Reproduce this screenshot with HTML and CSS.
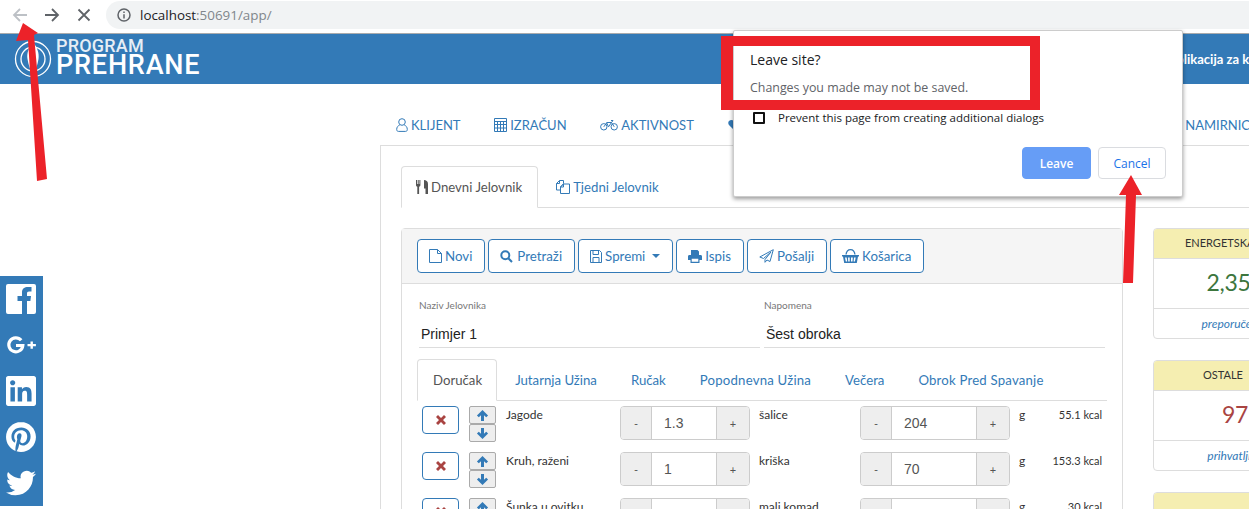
FILE: index.html
```html
<!DOCTYPE html>
<html lang="hr">
<head>
  <meta charset="UTF-8">
  <title>Program Prehrane</title>
  <link rel="stylesheet" href="styles.css">
</head>
<body>
  <svg class="sprite" width="0" height="0">
    <symbol id="i-up" viewBox="0 0 14 14"><path d="M7 1 13 7 11 9 8.6 6.6V13H5.4V6.6L3 9 1 7Z"/></symbol>
    <symbol id="i-down" viewBox="0 0 14 14"><path d="M7 13 1 7 3 5 5.4 7.4V1H8.6V7.4L11 5 13 7Z"/></symbol>
    <symbol id="i-x" viewBox="0 0 12 12"><path d="M3 1 6 4 9 1 11 3 8 6 11 9 9 11 6 8 3 11 1 9 4 6 1 3Z"/></symbol>
  </svg>

  <div class="toolbar">
    <svg class="nav-ico dim" viewBox="0 0 16 16"><path d="M15 8H2M8 2 2 8l6 6"/></svg>
    <svg class="nav-ico" viewBox="0 0 16 16"><path d="M1 8h13M8 2l6 6-6 6"/></svg>
    <svg class="nav-ico" viewBox="0 0 16 16"><path d="M2.5 2.5l11 11M13.500 2.500l-11 11"/></svg>
    <div class="omnibox">
      <svg class="info" viewBox="0 0 14 14"><circle cx="7" cy="7" r="6"/><path d="M7 6.200V10.500M7 3.500V5"/></svg>
      <span class="host">localhost</span><span class="path">:50691/app/</span>
    </div>
  </div>

  <header class="banner">
    <svg class="logo" viewBox="0 0 38 38">
      <circle cx="19" cy="19" r="17.500"/>
      <circle cx="19" cy="19" r="12"/>
      <path class="logo-fig" d="M19 2c4 5 6.500 11 5.500 17-.8 6-3 11-5.500 17-2.500-6-4.700-11-5.500-17-1-6 1.500-12 5.500-17Z"/>
    </svg>
    <div class="logo-text">
      <span class="logo-top">PROGRAM</span>
      <span class="logo-bottom">PREHRANE</span>
    </div>
    <span class="tagline">Aplikacija za kontrolu prehrane</span>
  </header>

  <nav class="mainnav">
    <a class="nav-item">
      <svg class="ico-line" width="12" height="14" viewBox="0 0 12 14"><circle cx="6" cy="4" r="3.300"/><path d="M3.600 7.200C2 7.700.7 9 .7 11.500c0 1.200.6 1.900 1.800 1.900h7c1.200 0 1.800-.7 1.800-1.900 0-2.500-1.300-3.800-2.900-4.300"/></svg>
      KLIJENT
    </a>
    <a class="nav-item">
      <svg class="ico-line" width="13" height="14" viewBox="0 0 13 14"><path d="M.5.500h12v13H.5zM.5 3.500h12M.5 6.500h12M.5 10h12M3.500 3.500v10M6.500 3.500v10M9.500 3.500v10"/></svg>
      IZRAČUN
    </a>
    <a class="nav-item">
      <svg class="ico-line" width="18" height="12" viewBox="0 0 18 12"><circle cx="3.800" cy="7.800" r="3.200"/><circle cx="14.200" cy="7.800" r="3.200"/><path d="M3.800 7.800 7 3.500h4.500l2.700 4.300M11 1.500h2l-1.500 2L8.500 7.800 6.500 3.500"/></svg>
      AKTIVNOST
    </a>
    <a class="nav-item">
      <svg class="ico-fill" width="14" height="12" viewBox="0 0 14 12"><path d="M7 12 1.200 6.200C-.6 4.300.2 1 3.500 1 5 1 6.200 1.800 7 3c.8-1.200 2-2 3.500-2 3.300 0 4.100 3.300 2.300 5.200Z"/></svg>
    </a>
    <a class="nav-item nav-last">NAMIRNICE</a>
  </nav>

  <main class="content">
    <div class="tabs">
      <a class="tab active">
        <svg class="ico-dark" width="12" height="14" viewBox="0 0 12 14"><path d="M0 0h1v4h.7V0h1v4h.7V0h1v5c0 1-.6 1.600-1.300 1.800V14H1.300V6.800C.6 6.600 0 6 0 5ZM8 0c2 0 4 1 4 4v10H9.500V8.500H8Z"/></svg>
        Dnevni Jelovnik
      </a>
      <a class="tab">
        <svg class="ico-line" width="14" height="14" viewBox="0 0 14 14"><path d="M.5 3.500 3.500.5h4v3.200L4.500 7v3H.5ZM4.500 7l3-3h6v9.500h-9ZM3.500.5v3h-3M7.500 4v3h-3"/></svg>
        Tjedni Jelovnik
      </a>
    </div>

    <div class="columns">
      <section class="panel">
        <div class="panel-head">
          <button class="btn">
            <svg class="ico-line" width="13" height="14" viewBox="0 0 13 14"><path d="M.5.500h8l4 4v9H.5ZM8.500.5v4h4"/></svg>
            Novi
          </button>
          <button class="btn">
            <svg class="ico-thick" width="14" height="13" viewBox="0 0 14 13"><circle cx="5.300" cy="5.300" r="4"/><path d="M8.300 8.300 12 12"/></svg>
            Pretraži
          </button>
          <button class="btn">
            <svg class="ico-line" width="12" height="13" viewBox="0 0 12 13"><path d="M.5.500h9l2 2v10H.5ZM3 .5v4h5.500v-4M3 12.500V7.500h6v5"/></svg>
            Spremi <i class="caret"></i>
          </button>
          <button class="btn">
            <svg class="ico-fill" width="14" height="13" viewBox="0 0 14 13"><path d="M3 0h6.500L11 1.500V5H3ZM0 6.500C0 5.500.6 5 1.500 5h11c.9 0 1.500.5 1.500 1.500V10h-2.500v3h-9v-3H0Zm3.700 2.300V11.800h6.600V8.800Z"/></svg>
            Ispis
          </button>
          <button class="btn">
            <svg class="ico-line" width="15" height="14" viewBox="0 0 15 14"><path d="M14.300.7.800 8 4.500 9.500 12 3 6 10.500V13.300L8 11l3 1.500Z"/></svg>
            Pošalji
          </button>
          <button class="btn">
            <svg class="ico-fill" width="17" height="14" viewBox="0 0 17 14"><path d="M0 6h17v1.500h-1L14.800 14H2.200L1 7.500H0ZM3 8.500l.8 4h1.400l-.5-4Zm3 0 .2 4h1.500v-4Zm3 0v4h1.500l.3-4Zm3 0-.4 4h1.300l.8-4ZM3.400 5.500C3.800 2 5.500 0 8.500 0s4.700 2 5.100 5.500h-1.300C12 3 10.800 1.300 8.500 1.300S5 3 4.700 5.500Z"/></svg>
            Košarica
          </button>
        </div>

        <div class="panel-body">
          <div class="fields">
            <label class="field">
              <span class="field-label">Naziv Jelovnika</span>
              <input class="field-input" type="text" value="Primjer 1">
            </label>
            <label class="field">
              <span class="field-label">Napomena</span>
              <input class="field-input" type="text" value="Šest obroka">
            </label>
          </div>

          <div class="tabs meal-tabs">
            <a class="tab active">Doručak</a>
            <a class="tab">Jutarnja Užina</a>
            <a class="tab">Ručak</a>
            <a class="tab tab-wide">Popodnevna Užina</a>
            <a class="tab">Večera</a>
            <a class="tab tab-wide">Obrok Pred Spavanje</a>
          </div>

          <div class="food-row">
            <button class="btn-del"><svg width="12" height="12"><use href="#i-x"/></svg></button>
            <div class="move"><button class="btn-move"><svg width="13" height="13"><use href="#i-up"/></svg></button><button class="btn-move"><svg width="13" height="13"><use href="#i-down"/></svg></button></div>
            <span class="food-name">Jagode</span>
            <div class="spinner small"><span class="spin-btn">-</span><input class="spin-val" value="1.3"><span class="spin-btn">+</span></div>
            <span class="food-unit">šalice</span>
            <div class="spinner"><span class="spin-btn">-</span><input class="spin-val" value="204"><span class="spin-btn">+</span></div>
            <div class="food-end"><span>g</span><span class="kcal">55.1 kcal</span></div>
          </div>
          <div class="food-row">
            <button class="btn-del"><svg width="12" height="12"><use href="#i-x"/></svg></button>
            <div class="move"><button class="btn-move"><svg width="13" height="13"><use href="#i-up"/></svg></button><button class="btn-move"><svg width="13" height="13"><use href="#i-down"/></svg></button></div>
            <span class="food-name">Kruh, raženi</span>
            <div class="spinner small"><span class="spin-btn">-</span><input class="spin-val" value="1"><span class="spin-btn">+</span></div>
            <span class="food-unit">kriška</span>
            <div class="spinner"><span class="spin-btn">-</span><input class="spin-val" value="70"><span class="spin-btn">+</span></div>
            <div class="food-end"><span>g</span><span class="kcal">153.3 kcal</span></div>
          </div>
          <div class="food-row">
            <button class="btn-del"><svg width="12" height="12"><use href="#i-x"/></svg></button>
            <div class="move"><button class="btn-move"><svg width="13" height="13"><use href="#i-up"/></svg></button><button class="btn-move"><svg width="13" height="13"><use href="#i-down"/></svg></button></div>
            <span class="food-name">Šunka u ovitku</span>
            <div class="spinner small"><span class="spin-btn">-</span><input class="spin-val" value=""><span class="spin-btn">+</span></div>
            <span class="food-unit">mali komad</span>
            <div class="spinner"><span class="spin-btn">-</span><input class="spin-val" value=""><span class="spin-btn">+</span></div>
            <div class="food-end"><span>g</span><span class="kcal">30 kcal</span></div>
          </div>
        </div>
      </section>

      <aside class="cards">
        <div class="card">
          <div class="card-head">ENERGETSKA VRIJ.</div>
          <div class="card-value good">2,350</div>
          <div class="card-foot">preporučeno*</div>
        </div>
        <div class="card">
          <div class="card-head">OSTALE (kg)</div>
          <div class="card-value bad">97</div>
          <div class="card-foot">prihvatljivo</div>
        </div>
        <div class="card">
          <div class="card-head"></div>
        </div>
      </aside>
    </div>
  </main>

  <div class="social">
    <svg viewBox="0 0 30 30"><path fill-rule="evenodd" d="M2 0H28A2 2 0 0 1 30 2V28A2 2 0 0 1 28 30H21V17H24.400L25 12H21V9.500C21 8.200 21.500 7.500 23 7.500H25.500V3H22C18.500 3 16 4.500 16 8.500V12H11.500V17H16V30H2A2 2 0 0 1 0 28V2A2 2 0 0 1 2 0Z"/></svg>
    <svg viewBox="0 0 30 30"><path class="gplus" d="M15.200 10.300A7 7 0 1 0 16.800 15.500H10"/><path d="M24.500 11.500h2.400v2.400h3v2.400h-3v2.400h-2.400v-2.400h-3v-2.400h3Z"/></svg>
    <svg viewBox="0 0 24 24"><path d="M20.447 20.452h-3.554v-5.569c0-1.328-.027-3.037-1.852-3.037-1.853 0-2.136 1.445-2.136 2.939v5.667H9.351V9h3.414v1.561h.046c.477-.9 1.637-1.85 3.37-1.85 3.601 0 4.267 2.37 4.267 5.455v6.286zM5.337 7.433c-1.144 0-2.063-.926-2.063-2.065 0-1.138.92-2.063 2.063-2.063 1.14 0 2.064.925 2.064 2.063 0 1.139-.925 2.065-2.064 2.065zm1.782 13.019H3.555V9h3.564v11.452zM22.225 0H1.771C.792 0 0 .774 0 1.729v20.542C0 23.227.792 24 1.771 24h20.451C23.2 24 24 23.227 24 22.271V1.729C24 .774 23.2 0 22.222 0h.003z"/></svg>
    <svg viewBox="0 0 24 24"><path d="M12.017 0C5.396 0 .029 5.367.029 11.987c0 5.079 3.158 9.417 7.618 11.162-.105-.949-.199-2.403.041-3.439.219-.937 1.406-5.957 1.406-5.957s-.359-.72-.359-1.781c0-1.663.967-2.911 2.168-2.911 1.024 0 1.518.769 1.518 1.688 0 1.029-.653 2.567-.992 3.992-.285 1.193.6 2.165 1.775 2.165 2.128 0 3.768-2.245 3.768-5.487 0-2.861-2.063-4.869-5.008-4.869-3.41 0-5.409 2.562-5.409 5.199 0 1.033.394 2.143.889 2.741.099.12.112.225.085.345-.09.375-.293 1.199-.334 1.363-.053.225-.172.271-.401.165-1.495-.69-2.433-2.878-2.433-4.646 0-3.776 2.748-7.252 7.92-7.252 4.158 0 7.392 2.967 7.392 6.923 0 4.135-2.607 7.462-6.233 7.462-1.214 0-2.354-.629-2.758-1.379l-.749 2.848c-.269 1.045-1.004 2.352-1.498 3.146 1.123.345 2.306.535 3.55.535 6.607 0 11.985-5.365 11.985-11.987C23.97 5.39 18.592.026 11.985.026L12.017 0z"/></svg>
    <svg viewBox="0 0 24 24"><path d="M23.953 4.57a10 10 0 01-2.825.775 4.958 4.958 0 002.163-2.723c-.951.555-2.005.959-3.127 1.184a4.92 4.92 0 00-8.384 4.482C7.69 8.095 4.067 6.13 1.64 3.162a4.822 4.822 0 00-.666 2.475c0 1.71.87 3.213 2.188 4.096a4.904 4.904 0 01-2.228-.616v.06a4.923 4.923 0 003.946 4.827 4.996 4.996 0 01-2.212.085 4.936 4.936 0 004.604 3.417 9.867 9.867 0 01-6.102 2.105c-.39 0-.779-.023-1.17-.067a13.995 13.995 0 007.557 2.209c9.053 0 13.998-7.496 13.998-13.985 0-.21 0-.42-.015-.63A9.935 9.935 0 0024 4.59z"/></svg>
  </div>

  <div class="dialog">
    <h2 class="dialog-title">Leave site?</h2>
    <p class="dialog-msg">Changes you made may not be saved.</p>
    <label class="dialog-check"><span class="check-box"></span>Prevent this page from creating additional dialogs</label>
    <div class="dialog-actions">
      <button class="dlg-btn primary">Leave</button>
      <button class="dlg-btn">Cancel</button>
    </div>
  </div>

  <div class="callout"></div>
  <svg class="arrows" viewBox="0 0 1249 509">
    <polygon points="23,23 38,33 34,35 47,179 37,181 28,40 16,41"/>
    <polygon points="1131,175 1142,195 1136,195 1133,283 1123,283 1126,195 1119,195"/>
  </svg>
</body>
</html>
```

FILE: styles.css
```css
* { box-sizing: border-box; }
html, body { margin: 0; height: 100%; }
body { position: relative; width: 1249px; height: 509px; overflow: hidden; background: #fff; font-family: Lato, sans-serif; font-size: 14px; color: #333; }
.sprite { position: absolute; }
button { font-family: inherit; }

/* browser chrome */
.toolbar { display: flex; align-items: center; height: 34px; padding: 0 0 4px 12px; gap: 16px; border-bottom: 1px solid #a9abad; }
.nav-ico { width: 16px; height: 16px; fill: none; stroke: #5f6368; stroke-width: 1.800; }
.nav-ico.dim { stroke: #bdc1c6; }
.omnibox { display: flex; align-items: center; flex: 1; height: 28px; margin-left: -2px; padding-left: 11px; border-radius: 14px 0 0 14px; background: #f1f3f4; font-family: "Open Sans", sans-serif; font-size: 13.400px; }
.info { width: 14px; height: 14px; margin-right: 9px; fill: none; stroke: #5f6368; stroke-width: 1.500; }
.host { color: #202124; }
.path { color: #80868b; }

/* site header */
.banner { display: flex; align-items: center; height: 50px; padding-left: 14px; background: #337ab7; color: #fff; white-space: nowrap; }
.logo { flex: none; width: 38px; height: 38px; fill: none; stroke: #fff; stroke-width: 1.300; }
.logo-fig { fill: #fff; stroke: none; }
.logo-text { display: flex; flex-direction: column; flex: none; margin: 0 0 6px 4px; font-family: Roboto, sans-serif; font-weight: 500; line-height: 1; }
.logo-top { height: 15px; font-size: 18px; letter-spacing: .2px; color: #e6eef5; }
.logo-bottom { font-size: 27px; letter-spacing: .8px; height: 24px; }
.tagline { flex: none; margin-left: 967px; font-weight: 700; font-size: 13px; }

/* main menu */
.mainnav { display: flex; align-items: center; height: 61px; padding: 20px 0 0 396px; gap: 33.700px; white-space: nowrap; }
.nav-item { display: flex; align-items: center; gap: 3px; color: #337ab7; font-size: 13px; flex: none; }
.nav-last { margin-left: 410px; }
.ico-line { flex: none; fill: none; stroke: #337ab7; stroke-width: 1; }
.ico-thick { flex: none; fill: none; stroke: #337ab7; stroke-width: 2; }
.ico-fill { flex: none; fill: #337ab7; }
.ico-dark { flex: none; fill: #555; }

.content { margin-left: 380px; padding: 20px 0 0 20px; border-top: 1px solid #ddd; border-left: 1px solid #ddd; width: 900px; }

.tabs { display: flex; height: 42px; border-bottom: 1px solid #ddd; }
.tab { display: flex; align-items: center; gap: 3px; height: 42px; margin-right: 2px; padding: 0 15px; border: 1px solid transparent; border-radius: 4px 4px 0 0; color: #337ab7; font-size: 13.200px; white-space: nowrap; }
.tab.active { padding-left: 14px; color: #555; border-color: #ddd; border-bottom-color: #fff; background: #fff; }
.tab-wide { letter-spacing: .2px; }

.columns { display: flex; gap: 30px; margin-top: 20px; }

/* menu panel */
.panel { flex: none; width: 722px; height: 300px; border: 1px solid #ddd; border-radius: 4px; }
.panel-head { display: flex; gap: 3px; height: 55px; padding: 10px 15px; background: #f5f5f5; border-bottom: 1px solid #ddd; }
.btn { display: flex; align-items: center; gap: 3px; height: 34px; padding: 0 12px 0 11px; border: 1px solid #337ab7; border-radius: 4px; background: #fff; color: #337ab7; font-size: 13.300px; }
.caret { width: 0; height: 0; margin-left: 4px; border-top: 4px solid #337ab7; border-left: 4px solid transparent; border-right: 4px solid transparent; }

.panel-body { padding: 15px 0 0 15px; }
.fields { display: flex; gap: 4px; padding-left: 2px; }
.field { display: flex; flex-direction: column; width: 341px; }
.field-label { height: 17px; font-size: 10px; line-height: 13px; color: #777; }
.field-input { height: 32px; padding: 4px 2px 0; border: 0; border-bottom: 1px solid #ddd; outline: 0; font-family: "Liberation Sans", sans-serif; font-size: 14px; color: #222; background: transparent; }
.meal-tabs { width: 690px; height: 42px; margin-top: 11px; }
.meal-tabs .tab { height: 42px; }
.meal-tabs .tab.active { padding: 0 14px 0 15px; }

.food-row { display: grid; grid-template-columns: 47px 37px 114px 130px 110px 150px 92px; height: 46px; margin-left: 5px; padding-top: 5px; font-size: 12px; }
.btn-del { display: flex; align-items: center; justify-content: center; width: 37px; height: 28px; padding: 0; border: 1px solid #337ab7; border-radius: 4px; background: #fff; fill: #a94442; }
.move { display: flex; flex-direction: column; width: 27px; }
.btn-move { display: flex; align-items: center; justify-content: center; height: 18px; padding: 0; border: 1px solid #aaa; border-radius: 2px; background: #eee; fill: #337ab7; }
.food-name, .food-unit { padding-top: 1px; line-height: 16px; }
.food-unit { padding-left: 9px; }
.spinner { display: flex; height: 34px; border: 1px solid #ccc; border-radius: 4px; overflow: hidden; }
.spin-btn { display: flex; align-items: center; justify-content: center; flex: none; width: 31px; background: #eee; color: #555; font-size: 11px; }
.spin-btn:first-child { border-right: 1px solid #ccc; }
.spin-btn:last-child { border-left: 1px solid #ccc; width: 33px; }
.spin-val { flex: 1; min-width: 0; padding: 0 0 0 12px; border: 0; outline: 0; font-family: "Liberation Sans", sans-serif; font-size: 14px; color: #555; }
.food-end { display: flex; justify-content: space-between; padding-left: 9px; line-height: 16px; padding-top: 1px; }
.kcal { font-size: 11px; }

/* side cards */
.cards { flex: none; display: flex; flex-direction: column; gap: 21px; width: 164px; }
.card { flex: none; height: 111px; border: 1px solid #ddd; border-radius: 4px; text-align: center; white-space: nowrap; }
.card-head { height: 30px; line-height: 28px; background: #f5eeb1; border-bottom: 1px solid #ddd; border-radius: 3px 3px 0 0; font-size: 11px; word-spacing: 4px; color: #333; }
.card-value { height: 50px; border-bottom: 1px solid #ddd; line-height: 46px; font-size: 23px; letter-spacing: -.3px; }
.good { color: #3c763d; }
.bad { color: #a94442; }
.card-foot { height: 30px; line-height: 29px; font-size: 12px; font-style: italic; color: #337ab7; }

/* overlays */
.social { position: absolute; left: 0; top: 276px; display: flex; flex-direction: column; gap: 16px; width: 43px; height: 230px; padding: 8px 6px 0; background: #337ab7; fill: #fff; }
.social svg { flex: none; width: 30px; height: 30px; }
.gplus { fill: none; stroke: #fff; stroke-width: 3.200; }

.dialog { position: absolute; left: 733px; top: 30px; width: 450px; height: 167px; padding: 20px 16px 0; background: #fff; border: 1px solid #ccc; border-radius: 2px; box-shadow: 0 2px 4px rgba(0,0,0,.4); font-family: "Open Sans", sans-serif; }
.dialog-title { margin: 0; font-size: 14px; font-weight: 400; line-height: 17px; color: #202124; }
.dialog-msg { margin: 11px 0 0; font-size: 12.400px; line-height: 17px; color: #5f6368; }
.dialog-check { display: flex; align-items: center; margin: 15px 0 0 3px; font-size: 11.500px; line-height: 14px; color: #202124; }
.check-box { flex: none; width: 12px; height: 12px; margin-right: 13px; border: 2px solid #111; border-radius: 1px; }
.dialog-actions { display: flex; justify-content: flex-end; gap: 7px; margin-top: 22px; }
.dlg-btn { width: 68px; height: 32px; padding: 0; border: 1px solid #dadce0; border-radius: 4px; background: #fff; color: #1a73e8; font-family: "Open Sans", sans-serif; font-size: 12px; font-weight: 400; }
.dlg-btn.primary { width: 69px; background: #669df6; border-color: #669df6; color: #fff; font-weight: 600; }

.callout { position: absolute; left: 721px; top: 36px; width: 319px; height: 74px; border: 10px solid #ec2229; border-left-width: 12px; }
.arrows { position: absolute; left: 0; top: 0; width: 1249px; height: 509px; fill: #ec2229; pointer-events: none; }
```
